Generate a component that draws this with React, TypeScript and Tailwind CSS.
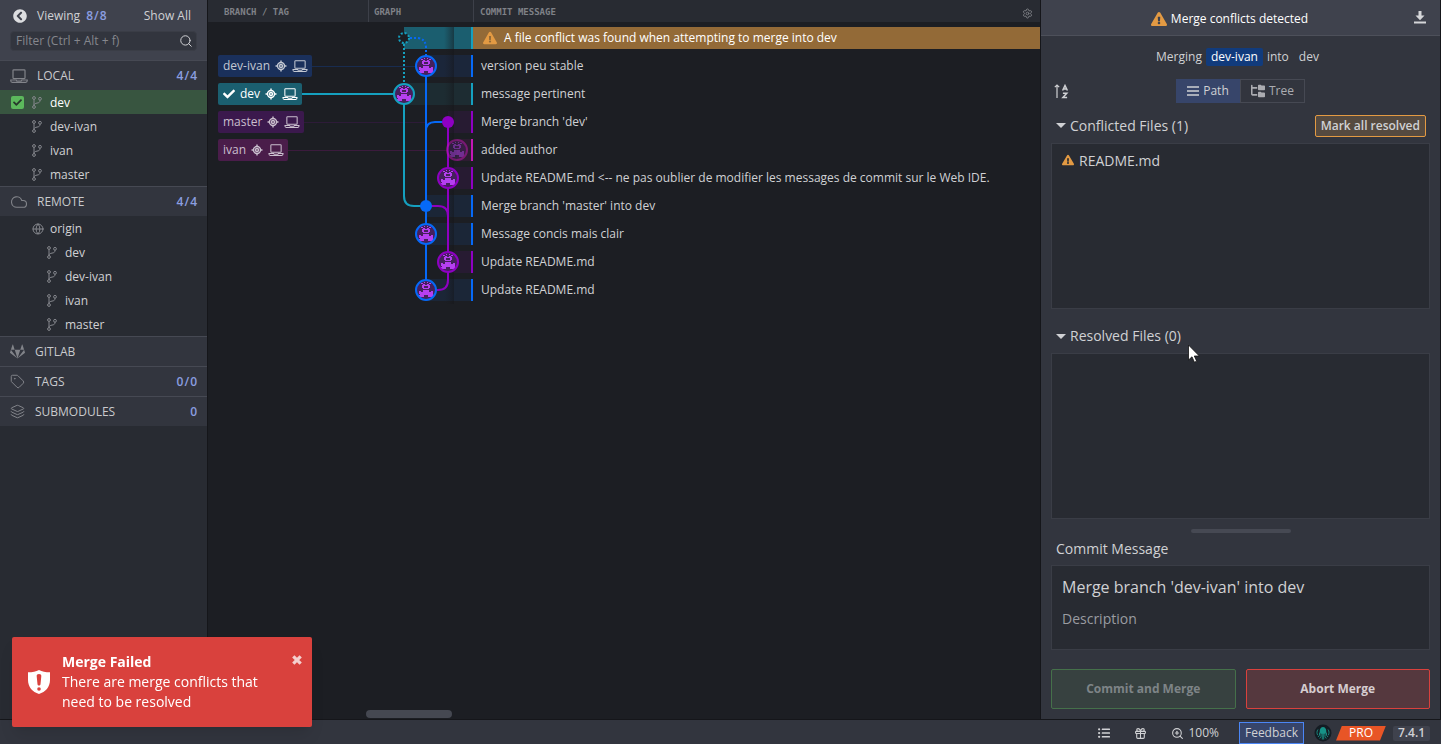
import React, { useState } from "react";
import { Cloud, Gift, Globe, Layers, LocateFixed, Search, Settings, Tag, ZoomIn } from "lucide-react";
import { FaCheck, FaChevronCircleLeft, FaExclamationTriangle, FaGitlab, FaListUl } from "react-icons/fa";
import { FaFolderTree } from "react-icons/fa6";

const SANS = "font-['Open_Sans','Noto_Sans',sans-serif]";

function LaptopIcon({ className = "" }: { className?: string }) {
  return (
    <svg viewBox="0 0 18 14" fill="none" stroke="currentColor" strokeWidth="1.2" className={className} aria-hidden="true">
      <rect x="3" y="0.8" width="12" height="8.8" rx="0.8" />
      <path d="M0.8 11h5.4l.6 1h4.4l.6-1h5.4v.8c0 .9-.6 1.5-1.5 1.5H2.3c-.9 0-1.5-.6-1.5-1.5z" />
    </svg>
  );
}

function BranchIcon() {
  return (
    <svg viewBox="0 0 10 13" fill="none" stroke="currentColor" className="mr-2 h-[13px] w-2.5 shrink-0 text-[#85878d]" aria-hidden="true">
      <circle cx="2" cy="2" r="1.4" />
      <circle cx="2" cy="11" r="1.4" />
      <circle cx="8" cy="2.8" r="1.4" />
      <path d="M2 3.4v6.2M8 4.2c0 2-1 2.600-3 2.900-1.800.3-3 .8-3 2.500" />
    </svg>
  );
}

function Count({ left, right }: { left: string; right?: string }) {
  return (
    <span className="flex gap-px font-semibold text-[#8b9ee0]">
      <span>{left}</span>
      {right && <span>/</span>}
      {right && <span>{right}</span>}
    </span>
  );
}

function SectionHeader({ icon, title, wide = false, children }: { icon: React.ReactNode; title: string; wide?: boolean; children?: React.ReactNode }) {
  return (
    <div className="flex h-[30px] items-center border-t border-[#464953] bg-[#32353e] px-2.5 text-[12px] text-[#c9cacd]">
      <span className={`flex shrink-0 text-[#82848a] ${wide ? "w-[27px]" : "w-[25px]"}`}>{icon}</span>
      <h2 className="flex-1">{title}</h2>
      {children}
    </div>
  );
}

function BranchRow({ name, nested = false, active = false }: { name: string; nested?: boolean; active?: boolean }) {
  return (
    <li>
      <a
        href="#branch"
        className={`flex h-6 items-center pt-px ${active ? "bg-[#385540] text-white" : "text-[#d0d1d4]"} ${nested ? "pl-[47px]" : active ? "pl-[11px]" : "pl-8"}`}
      >
        {active && (
          <span className="mr-2 flex size-[13px] items-center justify-center rounded-xs bg-[#5cb85c] text-[#27382b]">
            <FaCheck className="size-[9px]" />
          </span>
        )}
        <BranchIcon />
        {name}
      </a>
    </li>
  );
}

function Sidebar() {
  const [filter, setFilter] = useState("");
  return (
    <aside className="flex w-52 shrink-0 flex-col border-r border-[#15161a] bg-[#282b32] text-[12px] text-[#d0d1d4]">
      <div className="h-[60px] bg-[#3f424d] px-2.5">
        <div className="flex h-[31px] items-center pr-1.5 pl-[3px]">
          <button aria-label="Collapse sidebar"><FaChevronCircleLeft className="block size-[14px] text-[#dcdde0]" /></button>
          <span className="mr-1.5 ml-2.5">Viewing</span>
          <Count left="8" right="8" />
          <button className="ml-auto">Show All</button>
        </div>
        <div className="flex h-5 items-center rounded-sm border border-[#3a3d46] bg-[#32353e] pr-[3px] pl-[5px]">
          <input
            aria-label="Filter branches"
            placeholder="Filter (Ctrl + Alt + f)"
            value={filter}
            onChange={(e) => setFilter(e.target.value)}
            className="min-w-0 flex-1 bg-transparent outline-none placeholder:text-[#85878d]"
          />
          <Search className="size-[14px]" strokeWidth={1.7} />
        </div>
      </div>
      <SectionHeader wide icon={<LaptopIcon className="h-[14px] w-[18px]" />} title="LOCAL"><Count left="4" right="4" /></SectionHeader>
      <ul>
        <BranchRow name="dev" active />
        <BranchRow name="dev-ivan" />
        <BranchRow name="ivan" />
        <BranchRow name="master" />
      </ul>
      <SectionHeader wide icon={<Cloud className="size-[18px]" strokeWidth={1.5} />} title="REMOTE"><Count left="4" right="4" /></SectionHeader>
      <div className="flex h-6 items-center pt-px pl-8"><Globe className="mr-1.5 size-3 text-[#85878d]" strokeWidth={2} />origin</div>
      <ul>
        <BranchRow name="dev" nested />
        <BranchRow name="dev-ivan" nested />
        <BranchRow name="ivan" nested />
        <BranchRow name="master" nested />
      </ul>
      <SectionHeader icon={<FaGitlab className="size-[15px]" />} title="GITLAB" />
      <SectionHeader icon={<Tag className="size-[15px]" strokeWidth={1.6} />} title="TAGS"><Count left="0" right="0" /></SectionHeader>
      <SectionHeader icon={<Layers className="size-[15px]" strokeWidth={1.6} />} title="SUBMODULES"><Count left="0" /></SectionHeader>
    </aside>
  );
}

type Commit = {
  message: string;
  color: string;
  fill: string;
  x: number;
  kind: "avatar" | "dot" | "pending";
  label?: { name: string; box: string; line: string; current?: boolean };
};

const TEAL = "#15a0bf";
const BLUE = "#0669f7";
const PURPLE = "#8e00c2";
const MAGENTA = "#c517b6";

const commits: Commit[] = [
  { message: "A file conflict was found when attempting to merge into dev", color: TEAL, fill: "#1b5e6f", x: 36, kind: "pending" },
  { message: "version peu stable", color: BLUE, fill: "#1b263a", x: 58, kind: "avatar", label: { name: "dev-ivan", box: "bg-[#1a305b] text-[#c3c8d2]", line: "h-px bg-[#182c50]" } },
  { message: "message pertinent", color: TEAL, fill: "#1d2c32", x: 36, kind: "avatar", label: { name: "dev", box: "bg-[#1b5f70] text-white", line: "h-0.5 bg-[#15a0bf]", current: true } },
  { message: "Merge branch 'dev'", color: PURPLE, fill: "#271b32", x: 80, kind: "dot", label: { name: "master", box: "bg-[#3b194d] text-[#cabfce]", line: "h-px bg-[#2d1b38]" } },
  { message: "added author", color: MAGENTA, fill: "#2d1c31", x: 89, kind: "avatar", label: { name: "ivan", box: "bg-[#4a1d4a] text-[#cabfce]", line: "h-px bg-[#3b1b3d]" } },
  { message: "Update README.md <-- ne pas oublier de modifier les messages de commit sur le Web IDE.", color: PURPLE, fill: "#271b32", x: 80, kind: "avatar" },
  { message: "Merge branch 'master' into dev", color: BLUE, fill: "#1b2637", x: 58, kind: "dot" },
  { message: "Message concis mais clair", color: BLUE, fill: "#1b2637", x: 58, kind: "avatar" },
  { message: "Update README.md", color: PURPLE, fill: "#271b32", x: 80, kind: "avatar" },
  { message: "Update README.md", color: BLUE, fill: "#1b2637", x: 58, kind: "avatar" },
];

function Avatar({ x, y, color }: { x: number; y: number; color: string }) {
  return (
    <g>
      <circle cx={x} cy={y} r="10" fill="#45205c" />
      <path
        transform={`translate(${x - 7} ${y - 8})`}
        shapeRendering="crispEdges"
        fill="#b540f0"
        d="M2 1h2v1H2zM10 1h2v1h-2zM5 0h1v1H5zM8 0h1v1H8zM4 2h2v1h2V2h2v1h1v3H9V4H5v2H3V3h1zM4 6h6v1H4zM0 9h2v1h2V8h6v2h2V9h2v6H9v-2H5v2H0v-2h1v-1H0z"
      />
      <circle cx={x} cy={y} r="10" fill="none" stroke={color} strokeWidth="2" />
    </g>
  );
}

function Graph() {
  return (
    <svg width="105" height="280" viewBox="0 0 105 280" fill="none" className="block" role="img" aria-label="Commit graph">
      <defs>
        <linearGradient id="fold" x1="0" x2="1">
          <stop offset="0" stopColor="#1c1e23" stopOpacity="0" />
          <stop offset="1" stopColor="#141519" stopOpacity="0.5" />
        </linearGradient>
      </defs>
      {commits.map((c, i) => (
        <g key={i}>
          <rect x={c.x} y={i * 28 + 3} width={103 - c.x} height="22" fill={c.fill} />
          <rect x="103" y={i * 28 + 3} width="2" height="22" fill={c.color} />
        </g>
      ))}
      <rect x="76" y="3" width="10" height="277" fill="url(#fold)" />
      <path d="M0 42.5H48" stroke="#182c50" />
      <path d="M0 98.5H76" stroke="#2d1b38" />
      <path d="M0 126.5H80" stroke="#3b1b3d" />
      <path d="M0 70H27" stroke={TEAL} strokeWidth="2" />
      <g strokeWidth="2">
        <path d="M36 20V60" stroke={TEAL} strokeDasharray="2 2" />
        <path d="M42 14H50Q58 15 58 24V32" stroke={BLUE} strokeDasharray="2 2" />
        <circle cx="36" cy="14" r="5" fill="#1c1e23" stroke={TEAL} strokeDasharray="2 1.93" />
        <path d="M80 98V256Q80 266 70 266H58M58 182H70Q80 182 80 192" stroke={PURPLE} />
        <path d="M36 70V172Q36 182 46 182H58" stroke={TEAL} />
        <path d="M58 42V266M80 98H67Q58 98 58 107" stroke={BLUE} />
      </g>
      {commits.map((c, i) => {
        const y = i * 28 + 14;
        if (c.kind === "dot") return <circle key={i} cx={c.x} cy={y} r="6" fill={c.color} />;
        if (c.kind === "avatar")
          return (
            <g key={i} opacity={c.x === 89 ? 0.5 : 1}>
              <Avatar x={c.x} y={y} color={c.color} />
            </g>
          );
        return null;
      })}
    </svg>
  );
}

function CommitTable() {
  return (
    <main className="flex min-w-0 flex-1 flex-col bg-[#1c1e23]">
      <table className="w-full table-fixed border-separate border-spacing-0 text-[12px] text-[#d0d1d4]">
        <colgroup>
          <col className="w-[160px]" />
          <col className="w-[105px]" />
          <col />
        </colgroup>
        <thead className="text-left font-['DejaVu_Sans_Mono',monospace] text-[9px] text-[#7f8187]">
          <tr className="h-6">
            <th className="border-b-2 border-[#1c1e23] bg-[#282b32] p-0"><div className="flex h-[22px] items-center pt-1 pl-4">BRANCH / TAG</div></th>
            <th className="border-b-2 border-[#1c1e23] bg-[#282b32] p-0"><div className="flex h-[22px] items-center border-l border-[#3d4049] pt-1 pl-[5px]">GRAPH</div></th>
            <th className="border-b-2 border-[#1c1e23] bg-[#282b32] p-0">
              <div className="flex h-[22px] items-center justify-between border-l border-[#3d4049] pt-1 pr-[7px] pl-1.5">
                COMMIT MESSAGE
                <button aria-label="Column settings"><Settings className="block size-[11px]" /></button>
              </div>
            </th>
          </tr>
        </thead>
        <tbody>
          {commits.map((c, i) => (
            <tr key={i} className="h-7">
              <td className="p-0">
                {c.label && (
                  <div className="flex items-center pl-2.5">
                    <span className={`flex h-[22px] shrink-0 items-center gap-[5px] rounded-xs pr-1 pl-[5px] ${c.label.box}`}>
                      {c.label.current && <FaCheck className="size-3" />}
                      {c.label.name}
                      <LocateFixed className="size-3" strokeWidth={2.8} />
                      <LaptopIcon className="h-3 w-4" />
                    </span>
                    <span className={`flex-1 ${c.label.line}`} />
                  </div>
                )}
              </td>
              {i === 0 && <td rowSpan={10} className="p-0 align-top"><Graph /></td>}
              <td className="p-0">
                {i === 0 ? (
                  <div className="flex h-[22px] items-center gap-[7px] bg-[#936a37] pl-2.5 text-white">
                    <FaExclamationTriangle className="size-[14px] text-[#e39a43]" />
                    {c.message}
                  </div>
                ) : (
                  <div className="truncate pl-2">{c.message}</div>
                )}
              </td>
            </tr>
          ))}
        </tbody>
      </table>
      <div className="mt-auto mb-px ml-[158px] h-2 w-[86px] rounded-full bg-[#454851]" />
    </main>
  );
}

function Caret() {
  return <span className="size-0 border-x-[5px] border-t-[5px] border-x-transparent border-t-[#d0d1d4]" />;
}

function MergePanel() {
  const [title, setTitle] = useState("Merge branch 'dev-ivan' into dev");
  return (
    <section className="flex w-[401px] shrink-0 flex-col border-x border-[#15161a] bg-[#32353e] text-[#d0d1d4]">
      <header className="flex h-9 items-center border-b border-[#4d505a] bg-[#3f424d] pr-3.5 pl-1">
        <h1 className="flex flex-1 items-center justify-center gap-1 pt-0.5 text-[12px] font-medium text-white">
          <FaExclamationTriangle className="size-4 text-[#e39a43]" />
          Merge conflicts detected
        </h1>
        <button aria-label="Minimize panel">
          <svg viewBox="0 0 12 13" className="block h-[13px] w-3" fill="#d5d6d9" aria-hidden="true"><path d="M4.5 0h3v4.500H10.500L6 9.300 1.500 4.500h3zM0 10.500h12v2H0z" /></svg>
        </button>
      </header>
      <div className="flex min-h-0 flex-1 flex-col px-2.5 pb-2.5">
        <p className="flex h-[42px] items-center justify-center gap-1 pr-1.5 text-[12px]">
          Merging <span className="rounded-xs bg-[#113b7c] px-[5px] text-white">dev-ivan</span> into <span className="ml-1.5">dev</span>
        </p>
        <div className="flex h-[26px] items-center">
          <button aria-label="Sort files alphabetically" className="ml-[3px] flex w-[15px] items-center">
            <svg viewBox="0 0 15 15" className="size-[15px]" fill="none" stroke="currentColor" aria-hidden="true">
              <path d="M3 14V1M.8 3.200 3 1l2.200 2.200" strokeWidth="1.2" />
              <path d="M8.600 6.500 11 1.500l2.400 5M9.600 5h2.800M8.900 9.200h3.900l-3.900 4.300h4.200" strokeWidth="1.500" />
            </svg>
          </button>
          <div className="mx-auto flex pr-[18px] text-[12px]">
            <button className="flex h-6 w-16 items-center justify-center gap-1 bg-[#37456a]">
              <svg viewBox="0 0 12 10" className="h-2.5 w-3" stroke="currentColor" strokeWidth="1.3" aria-hidden="true"><path d="M0 1h12M0 5h12M0 9h12" /></svg>
              Path
            </button>
            <button className="flex h-6 w-[65px] items-center justify-center gap-1 border border-[#464953] text-[#abacb1]"><FaFolderTree className="size-[14px]" />Tree</button>
          </div>
        </div>
        <div className="flex h-[39px] items-center pt-1">
          <button className="flex items-center gap-1 pl-[5px] text-[14px] leading-5"><Caret />Conflicted Files (1)</button>
          <button className="mr-1 ml-auto flex h-[22px] items-center rounded-xs border border-[#e39a43] bg-[#554a40] px-[5px] text-[12px] font-semibold">Mark all resolved</button>
        </div>
        <ul className="min-h-0 flex-1 border border-[#3a3d46] bg-[#282b32] text-[14px]">
          <li className="flex h-8 items-center gap-[5px] px-2.5"><FaExclamationTriangle className="size-3 text-[#e39a43]" />README.md</li>
        </ul>
        <button className="flex h-11 shrink-0 items-center gap-1 pt-2.5 pl-[5px] text-[14px] leading-5"><Caret />Resolved Files (0)</button>
        <div className="min-h-0 flex-1 border border-[#3a3d46] bg-[#282b32]" />
        <div className="mx-auto mt-2.5 h-1 w-[100px] rounded-full bg-[#464953]" />
        <label htmlFor="commit-title" className="flex h-8 items-center pb-px pl-[5px] text-[14px]">Commit Message</label>
        <div className="h-[85px] border border-[#3a3d46] bg-[#282b32] px-2.5 pt-[7px]">
          <input id="commit-title" value={title} onChange={(e) => setTitle(e.target.value)} className="block h-7 w-full bg-transparent text-[16px] outline-none" />
          <textarea aria-label="Description" placeholder="Description" className="mt-2 block h-6 w-full resize-none bg-transparent text-[14px] leading-5 outline-none placeholder:text-[#9a9ca1]" />
        </div>
        <div className="mt-[19px] flex gap-2.5 text-[12px] font-bold">
          <button disabled className="h-10 flex-1 rounded-xs border border-[#45704a] bg-[#374140] text-[#7e8487]">Commit and Merge</button>
          <button className="h-10 flex-1 rounded-xs border border-[#d9413d] bg-[#55383e] text-[#d5cdd0]">Abort Merge</button>
        </div>
      </div>
    </section>
  );
}

function KrakenLogo() {
  return (
    <svg viewBox="0 0 18 18" className="size-[18px]" fill="none" aria-hidden="true">
      <circle cx="9" cy="9" r="8.5" fill="#141c23" />
      <path d="M9 3c-1.900 0-3.300 1.900-3.300 4.200 0 1.300.5 2 1.200 2.600h4.200c.7-.6 1.200-1.300 1.200-2.600C12.300 4.900 10.900 3 9 3z" fill="#179287" />
      <path d="M7 9v3.500l-1.300 2M8.300 9v6.500M9.700 9v6.500M11 9v3.500l1.300 2M5.500 8.500v2.800L4 13M12.500 8.500v2.800L14 13M4 5.500c-1.300 1.700-1.300 4-.3 5.700M14 5.500c1.300 1.700 1.300 4 .3 5.700" stroke="#179287" strokeWidth="0.9" />
    </svg>
  );
}

function StatusBar() {
  return (
    <footer className="flex h-[25px] shrink-0 items-center justify-end border-t border-[#15161a] bg-[#32353e] pt-0.5 pr-[11px] text-[12px] text-[#d0d1d4]">
      <button aria-label="Activity log" className="mr-6"><FaListUl className="block size-3" /></button>
      <button aria-label="What's new" className="mr-6"><Gift className="block size-[13px]" /></button>
      <button className="mr-5 flex items-center gap-1"><ZoomIn className="size-[13px]" />100%</button>
      <button className="mr-2.5 flex h-[22px] w-[65px] items-center justify-center border border-[#4b86f5] bg-[#37456a]">Feedback</button>
      <KrakenLogo />
      <span className="ml-1 flex h-[15px] w-[50px] items-center justify-center bg-[#e85526] text-white [clip-path:polygon(6px_0,100%_0,calc(100%-6px)_100%,0_100%)]">PRO</span>
      <span className="ml-[7px] flex h-[15px] w-[37px] items-center justify-center rounded-xs bg-[#3f424d] font-semibold">7.4.1</span>
    </footer>
  );
}

function Toast() {
  return (
    <div role="alert" className="fixed bottom-[17px] left-3 flex h-[90px] w-[300px] items-center rounded-xs bg-[#d9413d] pl-4 text-white shadow-lg">
      <svg viewBox="0 0 22 24" className="h-6 w-[22px] shrink-0" aria-hidden="true">
        <path d="M11 0c3 1.500 6.500 2.300 11 2.300V10c0 7-4.500 12-11 14C4.500 22 0 17 0 10V2.300C4.500 2.300 8 1.500 11 0z" fill="white" />
        <path d="M11 4c1.500 0 2.500.8 2.300 2.200l-.8 8c-.1 1.700-2.900 1.700-3 0l-.8-8C8.500 4.800 9.500 4 11 4z" fill="#d9413d" />
        <circle cx="11" cy="19" r="1.8" fill="#d9413d" />
      </svg>
      <div className="ml-3 w-[210px] text-[14px] leading-5">
        <strong className="block">Merge Failed</strong>
        There are merge conflicts that need to be resolved
      </div>
      <button aria-label="Dismiss" className="absolute top-[18px] right-2.5 text-[#f4cfce]">
        <svg viewBox="0 0 10 10" className="block size-2.5" stroke="currentColor" strokeWidth="3.2" aria-hidden="true"><path d="M1.300 1.300l7.400 7.400M8.700 1.300 1.300 8.700" /></svg>
      </button>
    </div>
  );
}

export default function App() {
  return (
    <div className={`flex h-screen flex-col overflow-hidden ${SANS}`}>
      <div className="flex min-h-0 flex-1">
        <Sidebar />
        <CommitTable />
        <MergePanel />
      </div>
      <StatusBar />
      <Toast />
      <svg viewBox="0 0 12 19" className="pointer-events-none fixed top-[344px] left-[1188px] h-[19px] w-3" aria-hidden="true">
        <path d="M.5 1v15l3.500-3.200 2.400 5.400 2.300-1L6.300 12h5z" fill="white" stroke="#111" strokeWidth="0.8" />
      </svg>
    </div>
  );
}
